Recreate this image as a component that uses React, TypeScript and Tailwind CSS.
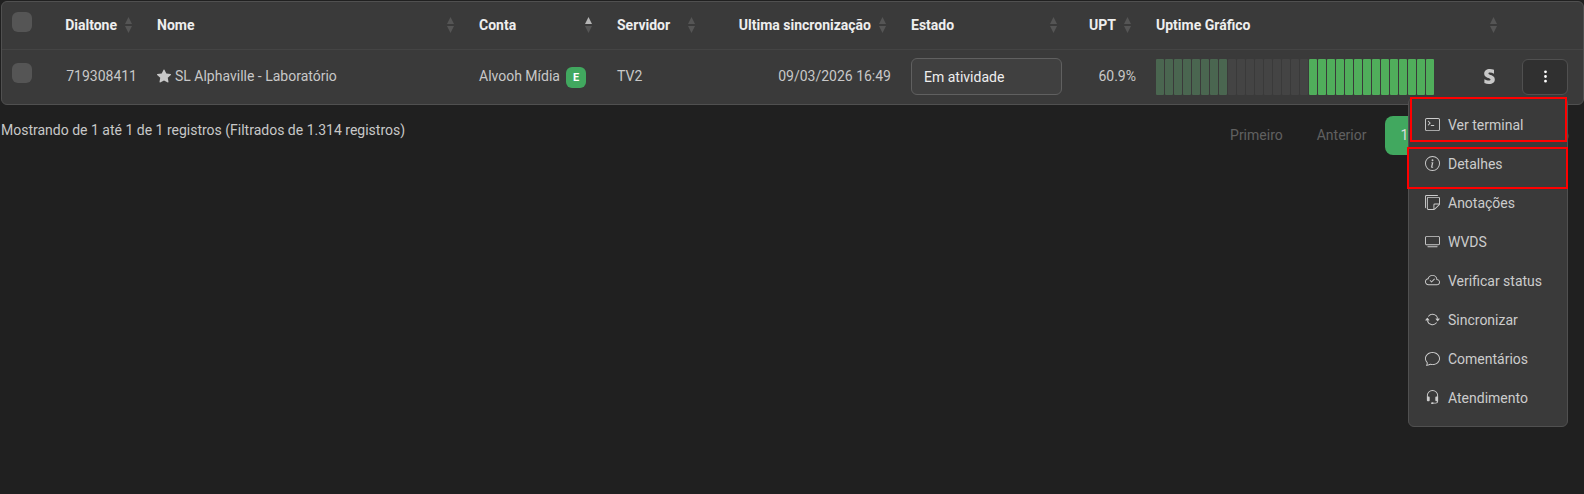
import React from 'react';
import {
    BsArrowRepeat,
    BsChat,
    BsCloudCheck,
    BsHeadset,
    BsInfoCircle,
    BsStarFill,
    BsStickies,
    BsTerminal,
    BsThreeDotsVertical,
    BsTv
} from 'react-icons/bs';
import { FaStripeS } from 'react-icons/fa';
import type { IconType } from 'react-icons';

interface Column {
    label: string;
    width: string;
    align?: 'right';
    sorted?: boolean;
}

// the empty width takes whatever space is left
const columns: Column[] = [
    { label: 'Dialtone', width: 'w-[93px]', align: 'right' },
    { label: 'Nome', width: '' },
    { label: 'Conta', width: 'w-[138px]', sorted: true },
    { label: 'Servidor', width: 'w-[103px]' },
    { label: 'Ultima sincronização', width: 'w-[191px]', align: 'right' },
    { label: 'Estado', width: 'w-[171px]' },
    { label: 'UPT', width: 'w-[74px]', align: 'right' },
    { label: 'Uptime Gráfico', width: 'w-[366px]' }
];

const menuItems: { label: string; icon: IconType }[] = [
    { label: 'Ver terminal', icon: BsTerminal },
    { label: 'Detalhes', icon: BsInfoCircle },
    { label: 'Anotações', icon: BsStickies },
    { label: 'WVDS', icon: BsTv },
    { label: 'Verificar status', icon: BsCloudCheck },
    { label: 'Sincronizar', icon: BsArrowRepeat },
    { label: 'Comentários', icon: BsChat },
    { label: 'Atendimento', icon: BsHeadset }
];

const pages = ['Primeiro', 'Anterior', '1', 'Próximo', 'Último'];

const uptime = [
    ...Array(8).fill('bg-[#4a6650]'),
    ...Array(9).fill('bg-[#444444]'),
    ...Array(14).fill('bg-[#50ae5b]')
];

const SortIcon: React.FC<{ sorted?: boolean }> = ({ sorted }) => (
    <svg width="7" height="16" viewBox="0 0 7 16" className="shrink-0" aria-hidden="true">
        <path d="M3.5 0 7 7H0z" fill={sorted ? '#b5b5b5' : '#555555'} />
        <path d="M0 9h7l-3.5 7z" fill="#555555" />
    </svg>
);

const Checkbox: React.FC<{ label: string }> = ({ label }) => (
    <input
        type="checkbox"
        aria-label={label}
        className="block size-5 appearance-none rounded-md bg-[#555555] checked:bg-[#41a85f]"
    />
);

const UptimeChart: React.FC = () => (
    <div className="flex gap-px" role="img" aria-label="Uptime 60.9%">
        {uptime.map((color, i) => (
            <span key={i} className={`h-9 w-2 rounded-[1px] ${color}`} />
        ))}
    </div>
);

const RowMenu: React.FC = () => (
    <div className="absolute top-full right-0 z-10 mt-0.5 w-40 rounded-md border border-[#505050] bg-[#3a3a3a] py-2">
        {menuItems.map(({ label, icon: Icon }) => (
            <button
                key={label}
                type="button"
                className="flex h-[39px] w-full items-center gap-2 px-4 text-left text-[#cccccc] hover:bg-[#444444]"
            >
                <Icon size={15} className="mb-0.5 shrink-0" />
                {label}
            </button>
        ))}
        <div className="pointer-events-none absolute -top-px right-0 left-px h-[45px] border-2 border-[#ff0000]" />
        <div className="pointer-events-none absolute top-[49px] -right-px -left-0.5 h-[42px] border-2 border-[#ff0000]" />
    </div>
);

const DeviceTable: React.FC = () => (
    <div className="rounded-md border border-[#505050] bg-[#3a3a3a]">
        <table className="w-full table-fixed">
            <thead>
                <tr className="h-[47px] border-b border-[#444444] text-[#eeeeee]">
                    <th className="w-[52px] pb-1.5 pl-2.5">
                        <Checkbox label="Selecionar todos" />
                    </th>
                    {columns.map(col => (
                        <th key={col.label} className={`pr-[15px] pl-2.5 font-bold ${col.width}`}>
                            <div
                                className={`flex items-center whitespace-nowrap ${
                                    col.align === 'right' ? 'justify-end gap-2' : 'justify-between'
                                }`}
                            >
                                {col.label}
                                <SortIcon sorted={col.sorted} />
                            </div>
                        </th>
                    ))}
                    <th className="w-[71px]" aria-label="Ações" />
                </tr>
            </thead>
            <tbody>
                <tr className="h-[55px] text-[#c8c8c8]">
                    <td className="pb-2 pl-2.5">
                        <Checkbox label="Selecionar SL Alphaville" />
                    </td>
                    <td className="px-2.5 pb-0.5 text-right">719308411</td>
                    <td className="px-2.5 pb-0.5">
                        <div className="flex items-center gap-1">
                            <BsStarFill size={14} />
                            SL Alphaville - Laboratório
                        </div>
                    </td>
                    <td className="px-2.5 pb-0.5">
                        <div className="flex items-center gap-1.5 whitespace-nowrap">
                            Alvooh Mídia
                            <span className="mt-1 flex h-[21px] w-5 items-center justify-center rounded-md bg-[#41a85f] text-[11px] font-bold text-white">
                                E
                            </span>
                        </div>
                    </td>
                    <td className="px-2.5 pb-0.5">TV2</td>
                    <td className="px-2.5 pb-0.5 text-right">09/03/2026 16:49</td>
                    <td className="px-2.5">
                        <select
                            aria-label="Estado"
                            className="block h-[37px] w-full appearance-none rounded-md border border-[#606060] bg-[#404040] px-3 text-[#eeeeee]"
                        >
                            <option>Em atividade</option>
                        </select>
                    </td>
                    <td className="px-2.5 pb-0.5 text-right">60.9%</td>
                    <td className="pr-[15px] pl-2.5">
                        <div className="flex items-center justify-between">
                            <UptimeChart />
                            <FaStripeS size={15} />
                        </div>
                    </td>
                    <td className="pr-[15px] pl-2.5">
                        <div className="relative">
                            <button
                                type="button"
                                aria-label="Abrir menu"
                                className="flex h-9 w-full items-center justify-center rounded-md border border-[#505050] bg-[#303030] text-white"
                            >
                                <BsThreeDotsVertical size={15} />
                            </button>
                            <RowMenu />
                        </div>
                    </td>
                </tr>
            </tbody>
        </table>
    </div>
);

const Pagination: React.FC = () => (
    <nav className="flex h-[39px] gap-1" aria-label="Paginação">
        {pages.map(page => (
            <button
                key={page}
                type="button"
                className={`px-[15px] pb-0.5 ${
                    page === '1' ? 'rounded-lg bg-[#41a85f] text-[#dddddd]' : 'text-[#606060]'
                }`}
            >
                {page}
            </button>
        ))}
    </nav>
);

const App: React.FC = () => (
    <main className="min-h-screen bg-[#202020] pt-px pl-px font-['Roboto',sans-serif] text-sm leading-6 text-[#c8c8c8]">
        <DeviceTable />
        <div className="flex items-start justify-between pt-[11px]">
            <p className="pt-0.5">Mostrando de 1 até 1 de 1 registros (Filtrados de 1.314 registros)</p>
            <Pagination />
        </div>
    </main>
);

export default App;
